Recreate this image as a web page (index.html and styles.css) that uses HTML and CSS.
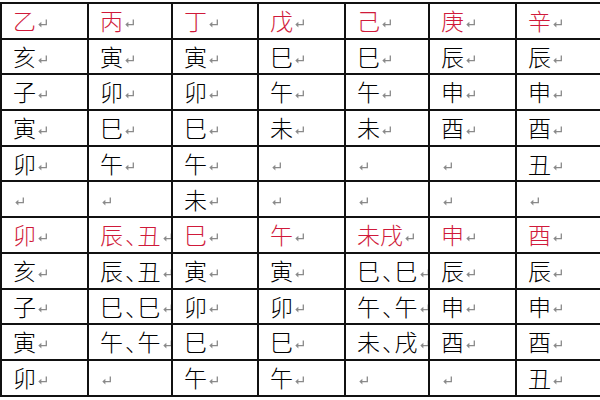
FILE: index.html
```html
<!DOCTYPE html>
<html lang="zh-CN">
<head>
<meta charset="utf-8">
<link rel="stylesheet" href="styles.css">
</head>
<body>
<div class="sheet">
<table class="grid">
<colgroup>
<col class="c1"><col class="c2"><col class="c3"><col class="c4"><col class="c5"><col class="c6"><col class="c7">
</colgroup>
<tbody id="rows"></tbody>
</table>
</div>
<script src="app.js"></script>
</body>
</html>
```
FILE: app.js
```js
var data = [
  ["r", "乙", "丙", "丁", "戊", "己", "庚", "辛"],
  ["", "亥", "寅", "寅", "巳", "巳", "辰", "辰"],
  ["", "子", "卯", "卯", "午", "午", "申", "申"],
  ["", "寅", "巳", "巳", "未", "未", "酉", "酉"],
  ["", "卯", "午", "午", "", "", "", "丑"],
  ["", "", "", "未", "", "", "", ""],
  ["r", "卯", "辰、丑", "巳", "午", "未戌", "申", "酉"],
  ["", "亥", "辰、丑", "寅", "寅", "巳、巳", "辰", "辰"],
  ["", "子", "巳、巳", "卯", "卯", "午、午", "申", "申"],
  ["", "寅", "午、午", "巳", "巳", "未、戌", "酉", "酉"],
  ["", "卯", "", "午", "午", "", "", "丑"]
];
var mark = '<svg class="pm" viewBox="0 0 10 9" width="10" height="9"><path d="M8.3 0.5V5.6H2.2" fill="none" stroke="currentColor" stroke-width="1.3"/><path d="M0.3 5.6L3.4 2.8V8.4Z" fill="currentColor"/></svg>';
var html = "";
data.forEach(function (row) {
  html += '<tr class="' + (row[0] === "r" ? "head" : "") + '">';
  for (var i = 1; i < row.length; i++) {
    var wide = row[i].length > 2;
    var t = row[i].replace(/、/g, '<span class="dun">、</span>');
    html += '<td><div class="cell' + (wide ? ' wide' : '') + '">' + t + mark + '</div></td>';
  }
  html += "</tr>";
});
document.getElementById("rows").innerHTML = html;
```
FILE: styles.css
```css
html, body {
  margin: 0;
  padding: 0;
  background: #fff;
  overflow: hidden;
}
body {
  width: 600px;
  height: 400px;
  font-family: "Noto Sans CJK SC", "Noto Sans", sans-serif;
}
.sheet {
  padding: 2px 0 0 0;
  width: 620px;
}
.grid {
  border-collapse: collapse;
  table-layout: fixed;
  width: 611px;
}
.c1 { width: 87px; }
.c2 { width: 84px; }
.c3 { width: 86px; }
.c4 { width: 87px; }
.c5 { width: 84px; }
.c6 { width: 87px; }
.c7 { width: 96px; }
.grid tr { height: 35.7px; }
.grid td {
  border: 2px solid #111;
  padding: 0;
  vertical-align: middle;
}
.cell {
  padding-left: 11px;
  white-space: nowrap;
  font-size: 23px;
  font-weight: 300;
  line-height: 33.5px;
  color: #000;
  display: flex;
  align-items: center;
}
.cell.wide { overflow: hidden; }
.head .cell { color: #d01a3a; }
.dun {
  font-feature-settings: "halt" 1;
  margin: 0 1px 0 2px;
}
.pm {
  flex: none;
  color: #8a8a8a;
  margin-left: 2px;
  margin-top: 5px;
}
```
